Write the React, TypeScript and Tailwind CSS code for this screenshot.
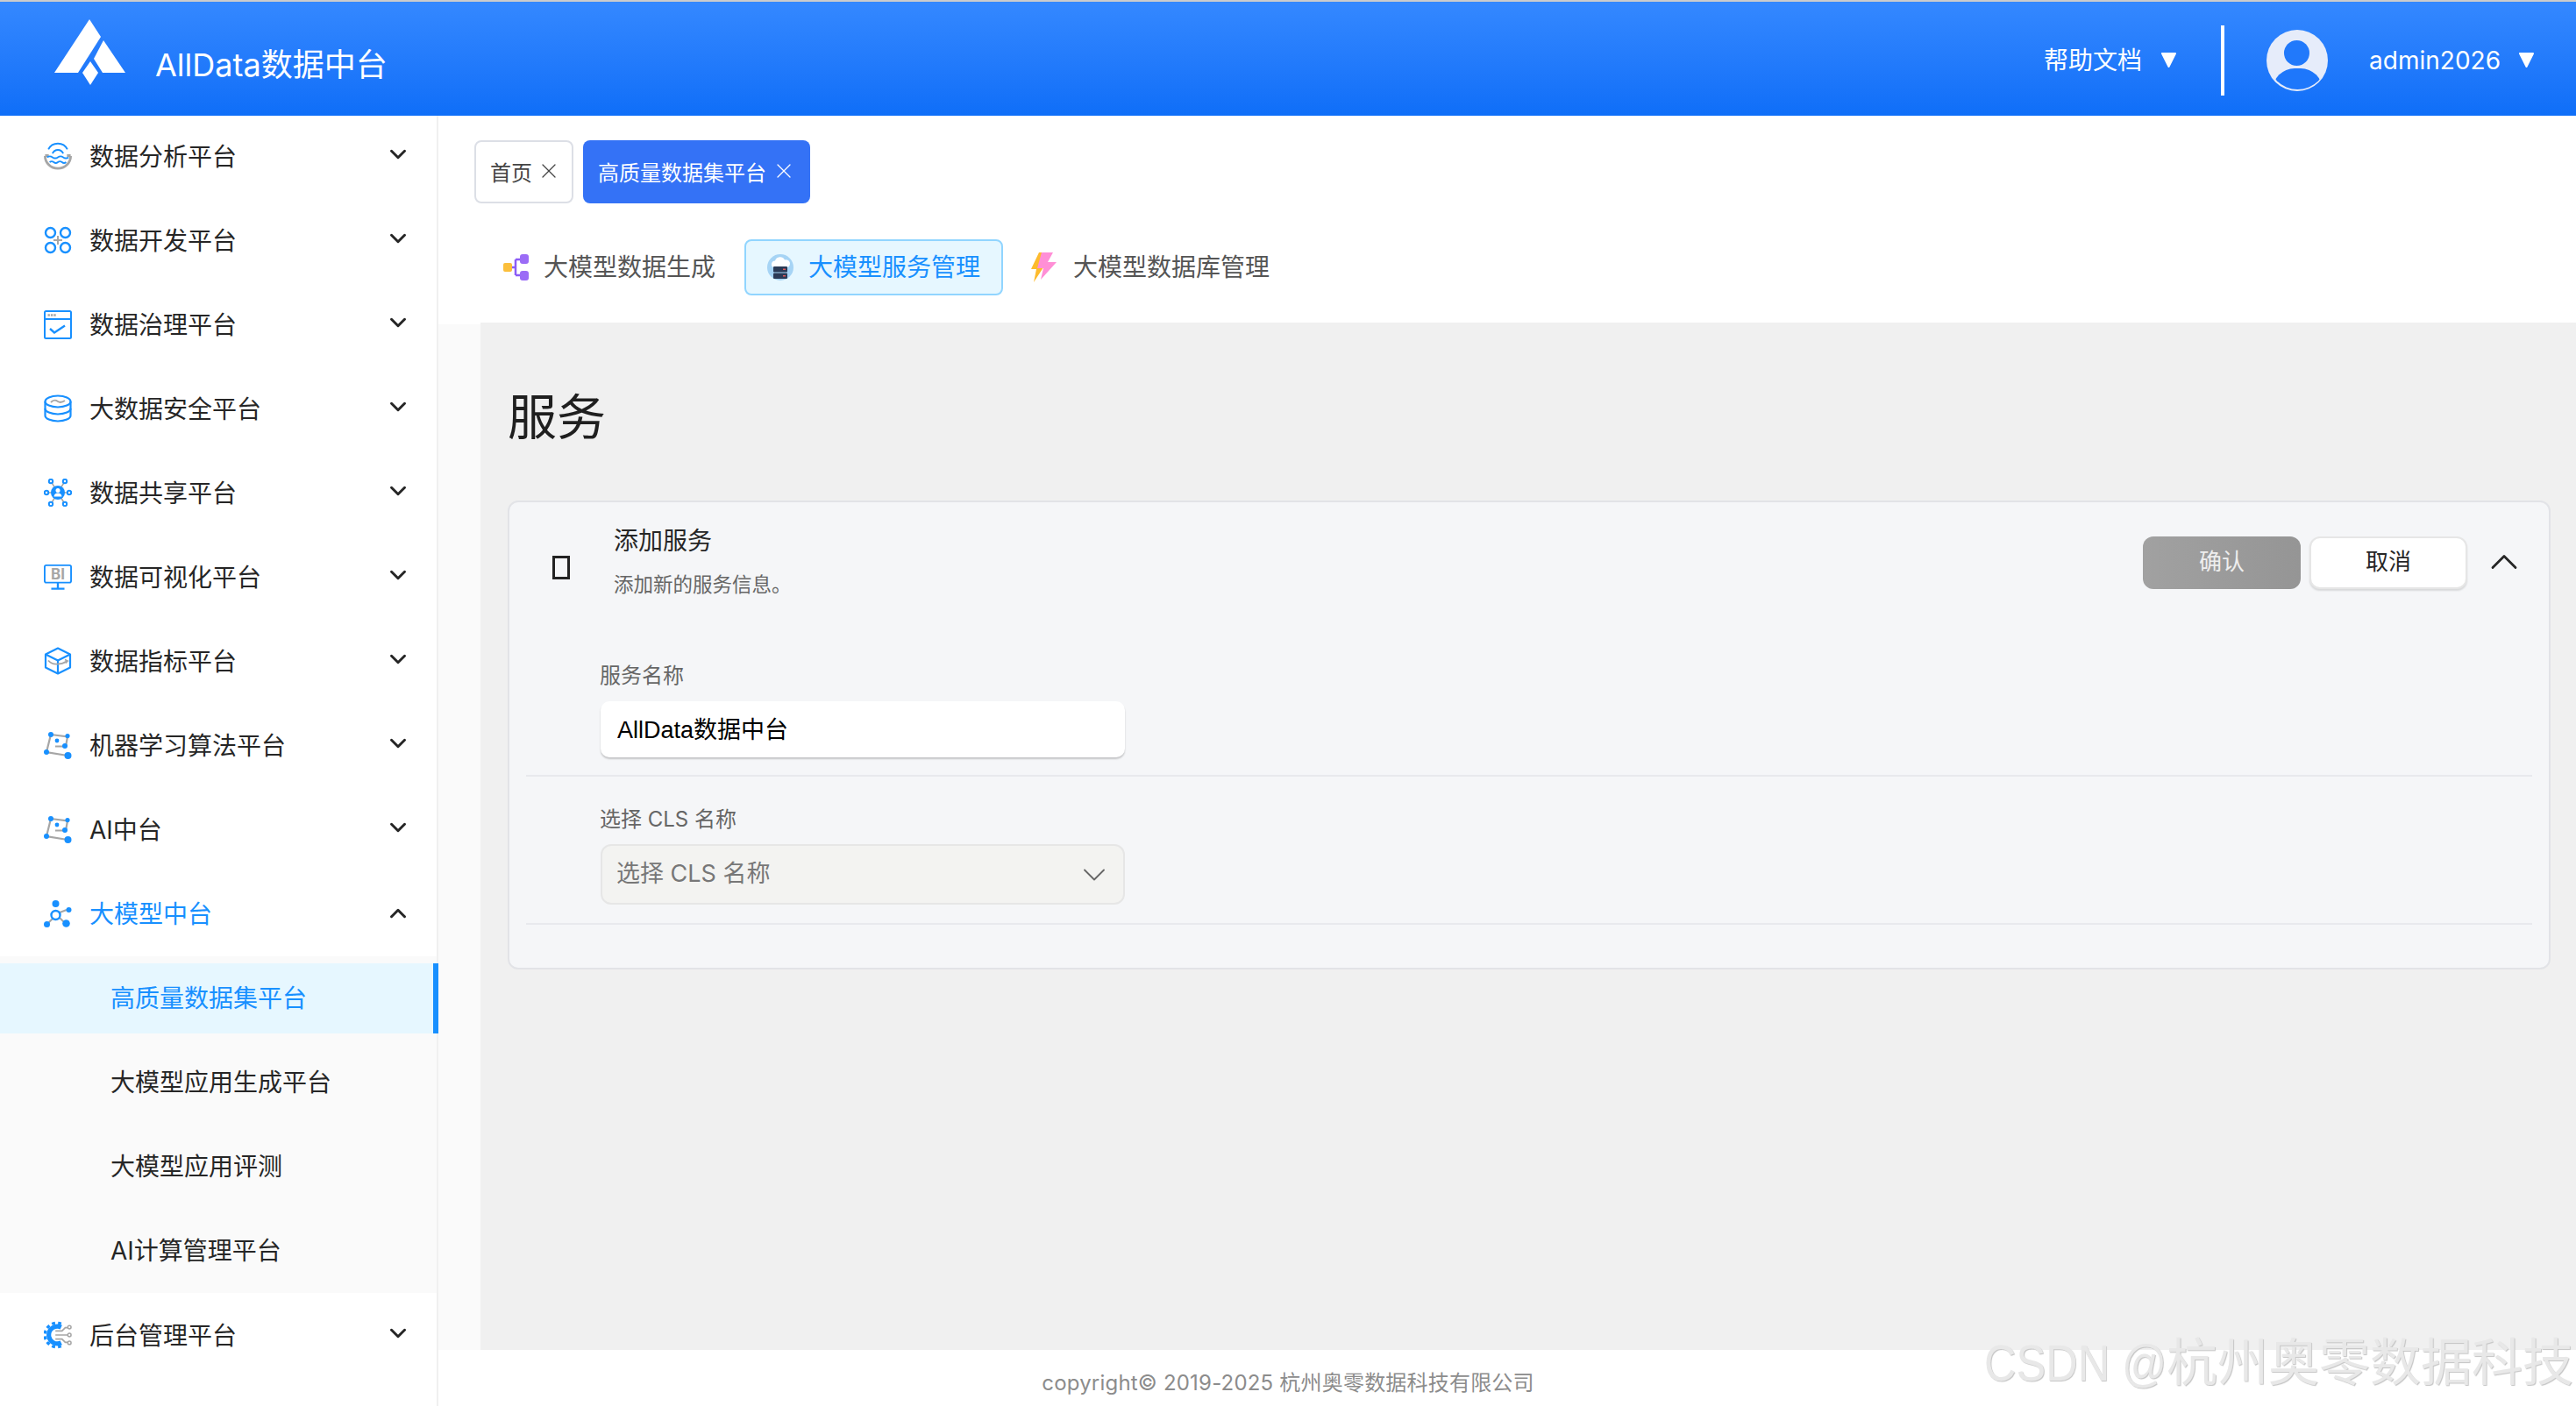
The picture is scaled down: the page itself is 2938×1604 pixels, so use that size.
import React from 'react';
import { ChevronDown, ChevronUp, X } from 'lucide-react';

const BLUE = '#1890ff';
const GRAY = '#a6a6a6';

const AnalysisIcon = () => (
  <svg width="34" height="32" viewBox="0 0 34 32" fill="none">
    <path d="M5.5 8C10 -1.5 24 -1.5 28.5 8" stroke={BLUE} strokeWidth="2" />
    <path d="M10.5 13C13 7 21 7 23.5 13" stroke={BLUE} strokeWidth="2" />
    <path d="M1.5 15.5H6M28 15.5H32.5" stroke={GRAY} strokeWidth="3" />
    <path d="M1.5 16A15.5 15 0 0 0 32.5 16" stroke={GRAY} strokeWidth="3" />
    <path d="M4 17.5q3.25-2.2 6.5 0t6.5 0 6.5 0 6.500 0" stroke={BLUE} strokeWidth="2" />
    <path d="M7 23.5q2.5-2 5 0t5 0 5 0 5 0" stroke={BLUE} strokeWidth="2" />
  </svg>
);

const DevIcon = () => (
  <svg width="32" height="32" viewBox="0 0 32 32" fill="none">
    <circle cx="7.5" cy="7.5" r="5.5" stroke={BLUE} strokeWidth="2.4" />
    <circle cx="24.5" cy="7.5" r="5.5" stroke={BLUE} strokeWidth="2.4" />
    <circle cx="7.5" cy="24.5" r="5.5" stroke={BLUE} strokeWidth="2.4" />
    <circle cx="24.5" cy="24.5" r="5.5" stroke={BLUE} strokeWidth="2.4" />
    <path d="M16 11v10M11 16h10" stroke={GRAY} strokeWidth="2" />
  </svg>
);

const GovernIcon = () => (
  <svg width="32" height="33" viewBox="0 0 32 33" fill="none">
    <rect x="1" y="1" width="30" height="31" rx="1.5" stroke={BLUE} strokeWidth="2" />
    <path d="M1 10h30" stroke={BLUE} strokeWidth="2" />
    <path d="M4.5 5.5h10" stroke={GRAY} strokeWidth="2.5" strokeDasharray="2.4 1" />
    <path d="M7 21l5 4.5 12-8" stroke={BLUE} strokeWidth="2.4" />
  </svg>
);

const SecurityIcon = () => (
  <svg width="32" height="32" viewBox="0 0 32 32" fill="none">
    <ellipse cx="16" cy="8" rx="14.5" ry="6.5" stroke={BLUE} strokeWidth="2.2" />
    <path d="M1.5 8v16c0 3.6 6.5 6.5 14.5 6.5s14.5-2.9 14.5-6.5V8" stroke={BLUE} strokeWidth="2.2" />
    <path d="M1.5 16c0 3.6 6.5 6.5 14.5 6.5s14.5-2.9 14.5-6.5" stroke={BLUE} strokeWidth="2.2" />
    <path d="M8 9c3-3 5-3 8-1s5 1 8-1" stroke={GRAY} strokeWidth="2" />
  </svg>
);

const ShareIcon = () => (
  <svg width="32" height="32" viewBox="0 0 32 32" fill="none">
    <path d="M8 3l16 26M24 3L8 29M3 16h26" stroke={GRAY} strokeWidth="1.5" />
    <circle cx="16" cy="16" r="8" fill={BLUE} />
    <circle cx="16" cy="13.5" r="2.5" fill="#fff" />
    <path d="M11.5 20.5c.5-3 2-4 4.5-4s4 1 4.5 4z" fill="#fff" />
    <circle cx="8" cy="3" r="2.2" fill="#fff" stroke={BLUE} strokeWidth="2" />
    <circle cx="24" cy="3" r="2.2" fill="#fff" stroke={BLUE} strokeWidth="2" />
    <circle cx="3" cy="16" r="2.2" fill="#fff" stroke={BLUE} strokeWidth="2" />
    <circle cx="29" cy="16" r="2.2" fill="#fff" stroke={BLUE} strokeWidth="2" />
    <circle cx="8" cy="29" r="2.2" fill="#fff" stroke={BLUE} strokeWidth="2" />
    <circle cx="24" cy="29" r="2.2" fill="#fff" stroke={BLUE} strokeWidth="2" />
  </svg>
);

const BiIcon = () => (
  <svg width="34" height="31" viewBox="0 0 34 31" fill="none">
    <rect x="1" y="1" width="32" height="21" rx="2" stroke={BLUE} strokeWidth="2" />
    <path d="M17 22v7M9 29.5h16" stroke={BLUE} strokeWidth="2.5" />
    <text x="17" y="18" textAnchor="middle" fontSize="18" fontWeight="700" fontFamily="Inter, sans-serif" fill={GRAY}>BI</text>
  </svg>
);

const CubeIcon = () => (
  <svg width="32" height="32" viewBox="0 0 32 32" fill="none">
    <path d="M16 1.5L30 8.5V23.5L16 30.5L2 23.5V8.5Z" stroke={BLUE} strokeWidth="2.2" strokeLinejoin="round" />
    <path d="M2 8.5L16 15.5L30 8.5M16 15.5V30.5" stroke={BLUE} strokeWidth="2.2" />
    <path d="M5 15.5c4 5 13 6 22 .5l-3-1.5M27 16l-2 2.5" stroke={GRAY} strokeWidth="1.8" />
  </svg>
);

const NodesIcon = () => (
  <svg width="32" height="31" viewBox="0 0 32 31" fill="none">
    <path d="M8 3l19 2.5-2 11H13M8 3L3 23l24 4" stroke={GRAY} strokeWidth="2.2" />
    <circle cx="8" cy="3" r="3" fill={BLUE} />
    <circle cx="27" cy="4.6" r="2.6" fill={BLUE} />
    <circle cx="15" cy="10" r="2.4" fill={BLUE} />
    <circle cx="24" cy="16" r="3" fill={BLUE} />
    <circle cx="3" cy="23" r="3" fill={BLUE} />
    <circle cx="27.5" cy="27" r="4" fill={BLUE} />
  </svg>
);

const ModelIcon = () => (
  <svg width="32" height="31" viewBox="0 0 32 31" fill="none">
    <path d="M5 26l6-6M18 20l5 5M18 14l8-3" stroke={GRAY} strokeWidth="2" />
    <circle cx="13.5" cy="4" r="4" fill={BLUE} />
    <circle cx="13.5" cy="17" r="5" stroke={BLUE} strokeWidth="2.4" />
    <circle cx="28.5" cy="11" r="3" fill={BLUE} />
    <circle cx="3.5" cy="27.5" r="3.5" fill={BLUE} />
    <circle cx="25.5" cy="26.5" r="4.3" fill={BLUE} />
  </svg>
);

const AdminIcon = () => (
  <svg width="34" height="32" viewBox="0 0 34 32" fill="none">
    <path d="M21 6.500A10.500 10.500 0 1 0 21 25.500" stroke={BLUE} strokeWidth="5.5" />
    <path d="M21 2.500A14.500 14.500 0 1 0 21 29.500" stroke={BLUE} strokeWidth="3.5" strokeDasharray="4 3.4" />
    <path d="M14 11h8l4-4h3M14 16h15M14 21h8l4 4h3" stroke={GRAY} strokeWidth="1.8" />
    <circle cx="31" cy="6.5" r="2" fill="#fff" stroke={GRAY} strokeWidth="1.6" />
    <circle cx="31" cy="16" r="2" fill="#fff" stroke={GRAY} strokeWidth="1.6" />
    <circle cx="31" cy="25.5" r="2" fill="#fff" stroke={GRAY} strokeWidth="1.6" />
  </svg>
);

const menuItems = [
  { label: '数据分析平台', icon: <AnalysisIcon /> },
  { label: '数据开发平台', icon: <DevIcon /> },
  { label: '数据治理平台', icon: <GovernIcon /> },
  { label: '大数据安全平台', icon: <SecurityIcon /> },
  { label: '数据共享平台', icon: <ShareIcon /> },
  { label: '数据可视化平台', icon: <BiIcon /> },
  { label: '数据指标平台', icon: <CubeIcon /> },
  { label: '机器学习算法平台', icon: <NodesIcon /> },
  { label: 'AI中台', icon: <NodesIcon /> },
];

const subItems = ['高质量数据集平台', '大模型应用生成平台', '大模型应用评测', 'AI计算管理平台'];

const Triangle = () => (
  <svg width="19" height="19" viewBox="0 0 19 19" className="shrink-0">
    <path d="M2 2h15L9.5 17z" fill="#fff" stroke="#fff" strokeWidth="2" strokeLinejoin="round" />
  </svg>
);

const Header = () => (
  <header className="flex h-[130px] shrink-0 items-center bg-gradient-to-b from-[#3488ff] to-[#0e6ef8] pl-[62px] pr-[47px] text-white">
    <svg width="81" height="75" viewBox="62 22 81 75" className="mb-[15px] shrink-0" fill="#fff">
      <path d="M102 22L115 42L89 83H62Z" />
      <path d="M118 46L143 83H117L107 67Z" />
      <path d="M103 70L112 83L103 97L94 83Z" />
    </svg>
    <div className="ml-[34px] mt-[13px] text-[36px] leading-[44px]">AllData数据中台</div>
    <div className="ml-auto mt-[3px] flex items-center">
      <span className="text-[28px] leading-[36px]">帮助文档</span>
      <div className="ml-[21px]"><Triangle /></div>
      <div className="ml-[50px] h-[80px] w-[4px] bg-white" />
      <div className="relative ml-[48px] h-[70px] w-[70px] overflow-hidden rounded-full bg-[#e6ecfa]">
        <div className="absolute left-[20px] top-[12px] h-[29px] w-[29px] rounded-full bg-[#2179fb]" />
        <div className="absolute inset-[1.5px] overflow-hidden rounded-full">
          <div className="absolute left-[5px] top-[43px] h-[50px] w-[57px] rounded-full bg-[#1e77fb]" />
        </div>
      </div>
      <span className="ml-[47px] text-[28px] leading-[36px]">admin2026</span>
      <div className="ml-[20px]"><Triangle /></div>
    </div>
  </header>
);

const Sidebar = () => (
  <aside className="flex w-[500px] shrink-0 flex-col border-r-2 border-[#f0f0f0] bg-white pt-[6px] text-[28px] text-[#262626]">
    {menuItems.map((item) => (
      <div key={item.label} className="mb-[16px] flex h-[80px] items-center pl-[50px]">
        <div className="flex w-[32px] justify-center">{item.icon}</div>
        <span className="ml-[20px] mt-[1px]">{item.label}</span>
        <ChevronDown size={30} strokeWidth={2.4} className="mb-[4px] ml-auto mr-[29px]" />
      </div>
    ))}
    <div className="mb-[9px] flex h-[80px] items-center pl-[50px] text-[#1890ff]">
      <div className="flex w-[32px] justify-center"><ModelIcon /></div>
      <span className="ml-[20px] mt-[1px]">大模型中台</span>
      <ChevronUp size={30} strokeWidth={2.4} className="ml-auto mr-[29px] text-[#262626]" />
    </div>
    <div className="flex flex-col gap-[16px] bg-[#fafafa] py-[8px]">
      {subItems.map((label, i) => (
        <div
          key={label}
          className={
            i === 0
              ? 'z-10 -mr-[2px] flex h-[80px] items-center border-r-[6px] border-[#1890ff] bg-[#e6f7ff] pl-[126px] text-[#1890ff]'
              : 'flex h-[80px] items-center pl-[126px]'
          }
        >
          {label}
        </div>
      ))}
    </div>
    <div className="mt-[8px] flex h-[80px] items-center pl-[50px]">
      <div className="flex w-[32px] justify-center"><AdminIcon /></div>
      <span className="ml-[20px] mt-[1px]">后台管理平台</span>
      <ChevronDown size={30} strokeWidth={2.4} className="mb-[4px] ml-auto mr-[29px]" />
    </div>
  </aside>
);

const TabBar = () => (
  <div className="h-[236px] shrink-0 bg-white">
    <div className="flex gap-[11px] pl-[41px] pt-[28px] text-[24px]">
      <div className="flex h-[72px] items-center rounded-[8px] border-2 border-[#dcdfe6] pl-[16px] pr-[12px] text-[#444]">
        <span className="pt-[4px]">首页</span>
        <X size={28} strokeWidth={1.1} className="mb-[2px] ml-[5px]" />
      </div>
      <div className="flex h-[72px] items-center rounded-[8px] bg-[#3472f6] pl-[17px] pr-[16px] text-white">
        <span className="pt-[4px]">高质量数据集平台</span>
        <X size={28} strokeWidth={1.1} className="mb-[2px] ml-[6px]" />
      </div>
    </div>
    <div className="mt-[41px] flex gap-[8px] pl-[48px] text-[28px] text-[#555]">
      <div className="flex h-[64px] items-center gap-[17px] pl-[26px] pr-[25px]">
        <svg width="29" height="30" viewBox="0 0 29 30" fill="none" className="shrink-0">
          <path d="M9 15h5M14 6v18M14 6h6M14 24h6" stroke="#8b5cf6" strokeWidth="2.5" />
          <rect x="0" y="10" width="10" height="10" rx="2" fill="#fbbf3c" />
          <rect x="19" y="0" width="10" height="11" rx="3" fill="#9b6cf6" />
          <rect x="19" y="19" width="10" height="11" rx="3" fill="#9b6cf6" />
        </svg>
        <span>大模型数据生成</span>
      </div>
      <div className="flex h-[64px] items-center gap-[17px] rounded-[8px] border-2 border-[#91d5ff] bg-[#e6f7ff] pl-[24px] pr-[24px] text-[#1890ff]">
        <svg width="30" height="30" viewBox="0 0 30 30" fill="none" className="shrink-0">
          <circle cx="15" cy="15" r="15" fill="#a6d4f5" />
          <path d="M7 15a4 4 0 0 1 2-7.5 6 6 0 0 1 11-1 4.5 4.5 0 0 1 3 8.500z" fill="#fff" />
          <rect x="7" y="14" width="16" height="6.5" rx="1" fill="#2b3a55" />
          <rect x="7" y="21.5" width="16" height="6.5" rx="1" fill="#2b3a55" />
          <rect x="18" y="16.5" width="3" height="1.5" fill="#e05a5a" />
          <rect x="18" y="24" width="3" height="1.5" fill="#e05a5a" />
        </svg>
        <span>大模型服务管理</span>
      </div>
      <div className="flex h-[64px] items-center gap-[19px] pl-[24px] pr-[25px]">
        <svg width="29" height="34" viewBox="0 0 29 34" fill="none" className="shrink-0">
          <path d="M9 0H17L11 14H16L3 34L6 19H0Z" fill="#fdbb2d" />
          <path d="M12 0H25L19 11H29L11 31L14 18H7Z" fill="#ff8fd6" />
        </svg>
        <span>大模型数据库管理</span>
      </div>
    </div>
  </div>
);

const ServiceCard = () => (
  <section className="mt-[67px] rounded-[12px] border-2 border-[#e2e3e7] bg-[#f5f6f8] pb-[49px]">
    <div className="flex items-start">
      <div className="ml-[49px] mt-[61px] h-[27px] w-[20px] shrink-0 border-[3px] border-[#222]" />
      <div className="ml-[50px] pt-[26px]">
        <div className="text-[28px] leading-[36px] text-[#262626]">添加服务</div>
        <div className="mt-[17px] text-[22.5px] leading-[30px] text-[#666]">添加新的服务信息。</div>
      </div>
      <div className="ml-auto mr-[35px] mt-[39px] flex items-center text-[26px]">
        <button className="h-[60px] w-[180px] rounded-[12px] bg-gradient-to-r from-[#a1a1a1] to-[#959595] pb-[3px] text-[#eee]">确认</button>
        <button className="ml-[10px] h-[60px] w-[180px] rounded-[12px] border-2 border-[#e6e6e6] bg-white pb-[3px] text-[#262626] shadow-[0_2px_2px_rgba(0,0,0,0.12)]">取消</button>
        <ChevronUp size={52} strokeWidth={1.3} className="mb-[3px] ml-[16px] mr-[-10px] text-[#262626]" />
      </div>
    </div>
    <div className="mx-[19px] mt-[74px]">
      <div className="border-b-2 border-[#e8e9ed] pb-[20px] pl-[85px]">
        <div className="-ml-px text-[24px] leading-[30px] text-[#666]">服务名称</div>
        <input
          readOnly
          value="AllData数据中台"
          className="mt-[14px] block h-[64px] w-[598px] rounded-[10px] bg-white px-[19px] pb-[4px] text-[27px] text-black shadow-[0_2px_2px_rgba(0,0,0,0.2)] outline-none [font-family:'Liberation_Sans','Noto_Sans_CJK_SC',sans-serif]"
        />
      </div>
      <div className="border-b-2 border-[#e8e9ed] pb-[21px] pl-[85px] pt-[34px]">
        <div className="-ml-px text-[24px] leading-[30px] text-[#666]">选择 CLS 名称</div>
        <div className="mt-[13px] flex h-[69px] w-[598px] items-center rounded-[12px] border-2 border-[#e6e6e6] bg-[#f3f3f1] pl-[16px] pr-[20px] text-[27px] text-[#777]">
          <span className="pb-[1px]">选择 CLS 名称</span>
          <ChevronDown size={44} strokeWidth={1} className="ml-auto mr-[-9px] text-[#666]" />
        </div>
      </div>
    </div>
  </section>
);

export default function App() {
  return (
    <div className="relative flex h-screen w-screen flex-col overflow-hidden bg-white [font-family:Inter,'Noto_Sans_CJK_SC',sans-serif]">
      <div className="h-[2px] shrink-0 bg-[#cccccc]" />
      <Header />
      <div className="flex min-h-0 flex-1">
        <Sidebar />
        <main className="flex min-w-0 flex-1 flex-col">
          <TabBar />
          <div className="flex min-h-0 flex-1">
            <div className="w-[48px] shrink-0 border-t-2 border-white bg-[#fafafa]" />
            <div className="min-w-0 flex-1 bg-[#f0f0f0] pl-[31px] pr-[29px] pt-[80px]">
              <h1 className="text-[56px] leading-[56px] text-[#1f1f1f]">服务</h1>
              <ServiceCard />
            </div>
          </div>
          <footer className="flex h-[64px] shrink-0 items-center justify-center pr-[500px] pt-[12px] text-[24px] tracking-[0.2px] text-[#8c8c8c]">
            copyright© 2019-2025 杭州奥零数据科技有限公司
          </footer>
        </main>
      </div>
      <div className="pointer-events-none absolute bottom-[20px] right-[3px] text-[58px] leading-[58px] text-[#e8e8e8] [font-family:'Liberation_Sans','Noto_Sans_CJK_SC',sans-serif] [text-shadow:1px_1px_1px_#c4c4c4]">
        <span className="inline-block origin-right scale-x-[0.87]">CSDN @</span>杭州奥零数据科技
      </div>
    </div>
  );
}
